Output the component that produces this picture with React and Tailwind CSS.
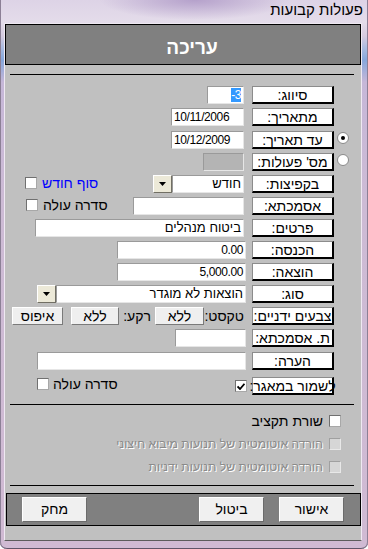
import React from "react";

function Label({ children }) {
  return (
    <div className="w-[82px] h-[18px] shrink-0 bg-white border-t border-l border-[#8c8c8c] border-r-2 border-b-2 border-r-black border-b-black flex items-center justify-center text-[14px] leading-none text-black whitespace-nowrap">
      {children}
    </div>
  );
}

function Field({ w, className = "", children, disabled }) {
  return (
    <div
      className={`h-[18px] shrink-0 border border-[#9a9a9a] border-r-[#e6e6e6] border-b-[#e6e6e6] text-[13px] leading-[16px] px-[2px] whitespace-nowrap overflow-hidden ${disabled ? "bg-[#b4b4b4]" : "bg-white"} ${w} ${className}`}
    >
      {children}
    </div>
  );
}

function Num({ children, left }) {
  return (
    <span dir="ltr" className={`block text-[12px] tracking-[-0.4px] leading-[16px] ${left ? "text-left" : "text-right"}`}>
      {children}
    </span>
  );
}

function DropBtn() {
  return (
    <div className="w-[19px] h-[18px] shrink-0 bg-[#ece9d8] border border-white border-r-[#716f64] border-b-[#716f64] flex items-center justify-center">
      <svg width="7" height="4" viewBox="0 0 7 4">
        <path d="M0 0h7L3.5 4z" fill="#000" />
      </svg>
    </div>
  );
}

function Btn({ w, className = "", children }) {
  return (
    <div
      className={`h-[18px] shrink-0 bg-[#efefef] border border-white border-r-[#7a7a7a] border-b-[#7a7a7a] flex items-center justify-center text-[14px] leading-none ${w} ${className}`}
    >
      {children}
    </div>
  );
}

function Radio({ on }) {
  return (
    <div className="w-[12px] h-[12px] mt-[1px] rounded-full bg-white border border-[#8a8a8a] flex items-center justify-center">
      {on && <div className="w-[4px] h-[4px] rounded-full bg-black" />}
    </div>
  );
}

function Check({ checked, disabled, className = "" }) {
  return (
    <div
      className={`w-[12px] h-[12px] shrink-0 border border-[#a8a8a8] border-t-[#707070] border-l-[#707070] flex items-center justify-center ${disabled ? "bg-[#d6d6d6] border-[#e8e8e8] border-t-[#a0a0a0] border-l-[#a0a0a0]" : "bg-white"} ${className}`}
    >
      {checked && (
        <svg width="8" height="7" viewBox="0 0 8 7">
          <path d="M0.5 3.5L3 6L7.5 0.8" fill="none" stroke="#000" strokeWidth="1.8" />
        </svg>
      )}
    </div>
  );
}

function Row({ h = "h-[22px]", radio, label, children }) {
  return (
    <div className={`flex items-start pr-[12px] ${h}`}>
      <div className="w-[12px] ml-[3px] shrink-0">{radio && <Radio on={radio === "on"} />}</div>
      <Label>{label}</Label>
      {children}
    </div>
  );
}

function FBtn({ className = "", children }) {
  return (
    <div
      className={`w-[65px] h-[25px] bg-[#f0f0f0] border border-white border-r-[#6b6b6b] border-b-[#6b6b6b] flex items-center justify-center text-[14px] font-['DejaVu_Sans',sans-serif] font-light ${className}`}
    >
      {children}
    </div>
  );
}

function CheckRow({ disabled, children }) {
  return (
    <div className="flex items-start h-[23px] pr-[20px]">
      <Check disabled={disabled} />
      <span
        className={`mr-[6px] -mt-[1px] leading-[14px] whitespace-nowrap ${disabled ? "text-[12.2px] text-[#8a8a8a] [text-shadow:1px_1px_0_#fff]" : "text-[14px] text-black"}`}
      >
        {children}
      </span>
    </div>
  );
}

export default function App() {
  return (
    <div className="w-[368px] h-[549px] overflow-hidden rounded-b-[7px] font-['Liberation_Sans',Arial,sans-serif] text-black bg-[linear-gradient(to_bottom,#ddd3e6_0px,#e4dcea_22px,#d6cbe0_36px,#a3b8e0_50px,#86a7dc_60px,#c6b7d8_82px,#cdbbd5_200px,#d0bad3_549px)] shadow-[inset_1px_0_0_#8c8096,inset_-1px_0_0_#8c8096,inset_0_-1px_0_#5f5468]">
      {/* title bar */}
      <div
        dir="rtl"
        className="h-[23px] flex items-start pr-[5px] pt-[1px] bg-[radial-gradient(ellipse_95px_20px_at_195px_0px,#b5a1cb,transparent)]"
      >
        <span className="text-[15px] leading-[18px]">פעולות קבועות</span>
      </div>

      {/* client area */}
      <div
        dir="rtl"
        className="ml-[4px] w-[358px] h-[518px] bg-[#c0c0c0] border border-[#efe9f2] border-b-[#5c5c5c]"
      >
        <div className="h-[41px] border border-black bg-[#808080] flex justify-center pt-[12px] pl-[18px]">
          <span className="text-white font-bold text-[19px] leading-[22px]">עריכה</span>
        </div>

        <div className="mt-[9px] mr-[7px] w-[344px] h-px bg-black" />

        <div className="mt-[11px] flex flex-col">
          <Row label="סיווג:">
            <Field w="w-[37px]" className="mr-[8px]">
              <Num>
                <span className="bg-[#3399ff] text-white">-3</span>
              </Num>
            </Field>
          </Row>
          <Row h="h-[23px]" label="מתאריך:">
            <Field w="w-[73px]" className="mr-[8px]">
              <Num left>10/11/2006</Num>
            </Field>
          </Row>
          <Row radio="on" label="עד תאריך:">
            <Field w="w-[73px]" className="mr-[8px]">
              <Num left>10/12/2009</Num>
            </Field>
          </Row>
          <Row radio="off" label="מס' פעולות:">
            <Field w="w-[41px]" className="mr-[8px]" disabled />
          </Row>
          <Row label="בקפיצות:">
            <Field w="w-[72px]" className="mr-[8px]">חודש</Field>
            <DropBtn />
            <div className="mr-auto ml-[20px] mt-[1px] flex items-center gap-[5px]">
              <span className="text-[14px] leading-[14px] text-[#0000ff]">סוף חודש</span>
              <Check />
            </div>
          </Row>
          <Row label="אסמכתא:">
            <Field w="w-[111px]" className="mr-[8px]" />
            <div className="mr-auto ml-[21px] mt-[1px] flex items-center gap-[5px]">
              <span className="text-[14px] leading-[14px]">סדרה עולה</span>
              <Check />
            </div>
          </Row>
          <Row label="פרטים:">
            <Field w="w-[209px]" className="mr-[8px]">ביטוח מנהלים</Field>
          </Row>
          <Row label="הכנסה:">
            <Field w="w-[129px]" className="mr-[6px]">
              <Num>0.00</Num>
            </Field>
          </Row>
          <Row label="הוצאה:">
            <Field w="w-[129px]" className="mr-[6px]">
              <Num>5,000.00</Num>
            </Field>
          </Row>
          <Row label="סוג:">
            <Field w="w-[190px]" className="mr-[6px]">הוצאות לא מוגדר</Field>
            <DropBtn />
          </Row>
          <Row label="צבעים ידניים:">
            <span className="w-[40px] mr-[8px] mt-[1px] text-[14px] leading-[16px] whitespace-nowrap">טקסט:</span>
            <Btn w="w-[49px]">ללא</Btn>
            <span className="w-[32px] mr-[4px] mt-[1px] text-[14px] leading-[16px] whitespace-nowrap">רקע:</span>
            <Btn w="w-[48px]">ללא</Btn>
            <Btn w="w-[51px]" className="mr-[8px]">איפוס</Btn>
          </Row>
          <Row h="h-[23px]" label="ת. אסמכתא:">
            <Field w="w-[71px]" className="mr-[6px]" />
          </Row>
          <Row h="h-[25px]" label="הערה:">
            <Field w="w-[209px]" className="mr-[6px]" />
          </Row>
          <Row label="לשמור במאגר:">
            <Check checked className="mr-[5px] mt-[3px]" />
            <div className="mr-auto ml-[32px] flex items-center gap-[4px]">
              <span className="text-[14px] leading-[14px]">סדרה עולה</span>
              <Check />
            </div>
          </Row>
        </div>

        <div className="mt-[5px] mr-[7px] w-[344px] h-px bg-black" />

        <div className="mt-[10px] flex flex-col">
          <CheckRow>שורת תקציב</CheckRow>
          <CheckRow disabled>הורדה אוטומטית של תנועות מיבוא חיצוני</CheckRow>
          <CheckRow disabled>הורדה אוטומטית של תנועות ידניות</CheckRow>
        </div>

        <div className="mt-[1px] mr-[7px] w-[344px] h-px bg-black" />

        <div className="mt-[7px] w-[355px] h-[33px] border border-black bg-[#808080] flex items-center pr-[16px]">
          <FBtn>אישור</FBtn>
          <FBtn className="mr-[15px]">ביטול</FBtn>
          <FBtn className="mr-auto ml-[15px]">מחק</FBtn>
        </div>
      </div>
    </div>
  );
}
